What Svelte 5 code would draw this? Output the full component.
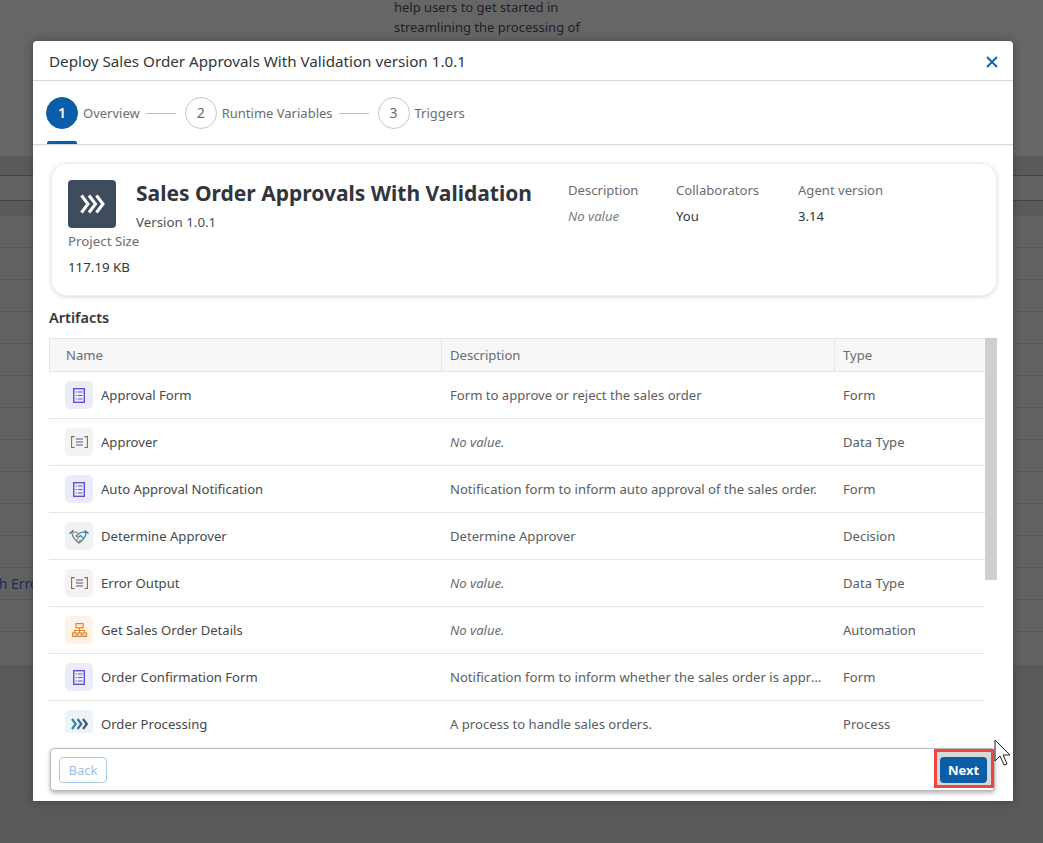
<script>
  const rows = [
    { name: 'Approval Form', desc: 'Form to approve or reject the sales order', type: 'Form', icon: 'form' },
    { name: 'Approver', desc: 'No value.', type: 'Data Type', icon: 'data', empty: true },
    { name: 'Auto Approval Notification', desc: 'Notification form to inform auto approval of the sales order.', type: 'Form', icon: 'form' },
    { name: 'Determine Approver', desc: 'Determine Approver', type: 'Decision', icon: 'decision' },
    { name: 'Error Output', desc: 'No value.', type: 'Data Type', icon: 'data', empty: true },
    { name: 'Get Sales Order Details', desc: 'No value.', type: 'Automation', icon: 'auto', empty: true },
    { name: 'Order Confirmation Form', desc: 'Notification form to inform whether the sales order is approved or rejected.', type: 'Form', icon: 'form' },
    { name: 'Order Processing', desc: 'A process to handle sales orders.', type: 'Process', icon: 'process' }
  ];
  const steps = [
    { n: 1, label: 'Overview' },
    { n: 2, label: 'Runtime Variables' },
    { n: 3, label: 'Triggers' }
  ];
  const bgRows = Array.from({ length: 14 });
</script>

<div class="page">
  <div class="bgtop">
    <div class="bgtext">
      <div>help users to get started in</div>
      <div>streamlining the processing of</div>
    </div>
  </div>
  <div class="bgband"></div>
  <div class="bgfield"></div>
  <div class="bgband2"></div>
  <div class="bgrows">
    {#each bgRows as _, i}
      <div class="bgrow">{#if i === 11}<span>ch Error</span>{/if}</div>
    {/each}
  </div>
  <div class="bgbottom"></div>

  <div class="modal">
    <header class="head">
      <span class="title">Deploy Sales Order Approvals With Validation version 1.0.1</span>
      <svg class="close" viewBox="0 0 12 12" width="12" height="12"><path d="M1 1l10 10M11 1L1 11" stroke="#0a5ea8" stroke-width="1.8" fill="none"/></svg>
    </header>

    <nav class="steps">
      {#each steps as s, i}
        <div class="step" class:active={i === 0}>
          <span class="num">{s.n}</span>
          <span class="lbl">{s.label}</span>
          {#if i < 2}<span class="dash"></span>{/if}
        </div>
      {/each}
    </nav>

    <div class="body">
      <section class="card">
        <div class="left">
          <div class="top">
            <div class="logo">
              <svg viewBox="0 0 25 20" width="25" height="20" fill="none" stroke="#fff" stroke-width="3">
                <path d="M1.5 1.5l6.500 8.500-6.500 8.500M9 1.500l6.500 8.500-6.500 8.500M16.500 1.500l6.500 8.500-6.500 8.500"/>
              </svg>
            </div>
            <div class="names">
              <h1>Sales Order Approvals With Validation</h1>
              <div class="ver">Version 1.0.1</div>
            </div>
          </div>
          <div class="size-l">Project Size</div>
          <div class="size-v">117.19 KB</div>
        </div>
        <div class="meta">
          <div class="m1"><div class="ml">Description</div><div class="mv novalue">No value</div></div>
          <div class="m2"><div class="ml">Collaborators</div><div class="mv">You</div></div>
          <div class="m3"><div class="ml">Agent version</div><div class="mv">3.14</div></div>
        </div>
      </section>

      <h2>Artifacts</h2>

      <div class="tablewrap">
        <div class="table">
          <div class="thead">
            <div class="c1">Name</div><div class="c2">Description</div><div class="c3">Type</div>
          </div>
          {#each rows as r}
            <div class="row">
              <div class="c1 namecell">
                <span class="ico {r.icon}">
                  {#if r.icon === 'form'}
                    <svg viewBox="0 0 12 15" width="12" height="15" fill="none">
                      <rect x=".7" y=".7" width="10.6" height="13.6" stroke="#5a45d8" stroke-width="1.300"/>
                      <path d="M2.500 4h1.200M5 4h4.500M2.500 7.500h1.200M5 7.500h4.500M2.500 11h1.200M5 11h4.500" stroke="#3d68c8" stroke-width="1"/>
                    </svg>
                  {:else if r.icon === 'data'}
                    <svg viewBox="0 0 17 12" width="17" height="12" fill="none" stroke-width="1.050">
                      <path d="M3.500 .6H.6v10.800h2.900M13.500 .6h2.900v10.800h-2.900" stroke="#96652f"/>
                      <path d="M5 3h7M5 6h7M5 9h7" stroke="#5a4f8c"/>
                    </svg>
                  {:else if r.icon === 'decision'}
                    <svg viewBox="0 0 20 15" width="20" height="15" fill="none" stroke-width="1.200">
                      <path d="M.5 4.500L4.500 1.500M19.500 4.500L15.500 1.500" stroke="#2f5f7f"/>
                      <path d="M3 4c.3 3.500 3.500 7.500 7 10 3.500-2.500 6.700-6.500 7-10-2.500-1.500-5-1-7 .5L7 7c1 1.500 2.500 1.200 3.500.3l1-.8 3.500 3.500" stroke="#3f7fa8"/>
                      <path d="M3 4c2-1.200 4-1 6 0M7 11.500l2.500-2M9.500 13l2.500-2.200" stroke="#d18a3a"/>
                    </svg>
                  {:else if r.icon === 'auto'}
                    <svg viewBox="0 0 15 14" width="15" height="14" fill="none" stroke="#e3872a" stroke-width="1.200">
                      <rect x="4" y=".6" width="7" height="4.200"/>
                      <path d="M7.500 4.800V8M2.500 10V7.500h10V10M7.500 8v2"/>
                      <rect x=".6" y="10" width="3.500" height="3.400"/>
                      <rect x="5.750" y="10" width="3.500" height="3.400"/>
                      <rect x="10.900" y="10" width="3.500" height="3.400"/>
                    </svg>
                  {:else}
                    <svg viewBox="0 0 17 12" width="17" height="12" fill="none" stroke-width="2.200">
                      <path d="M1 1l3.800 5L1 11" stroke="#2e88b0"/>
                      <path d="M6.500 1l3.800 5-3.800 5" stroke="#33708f"/>
                      <path d="M12 1l3.800 5-3.800 5" stroke="#3c5a70"/>
                    </svg>
                  {/if}
                </span>
                <span class="nm">{r.name}</span>
              </div>
              <div class="c2 desc" class:novalue={r.empty}>{r.desc}</div>
              <div class="c3">{r.type}</div>
            </div>
          {/each}
        </div>
        <div class="scroll"><div class="thumb"></div></div>
      </div>

      <footer class="foot">
        <button class="back" disabled>Back</button>
        <button class="next">Next</button>
        <span class="callout"></span>
      </footer>
    </div>
  </div>

  <svg class="cursor" viewBox="0 0 20 30" width="20" height="30">
    <path d="M1 1v21l5-5 4 9 3-1-4-9h7z" fill="#fff" stroke="#222" stroke-width="1"/>
  </svg>
</div>

<style>
  :global(body) {
    margin: 0;
    background: #5c5c5c;
    font-family: "Noto Sans", "Open Sans", sans-serif;
  }
  .page {
    position: relative;
    width: 1043px;
    height: 843px;
    overflow: hidden;
    background: #5a5a5a;
    font-size: 13px;
    color: #32363a;
  }
  .bgtop { height: 156px; background: #666; overflow: hidden; }
  .bgtext {
    padding-left: 394px;
    color: #1e1e28;
    line-height: 20px;
    margin-top: -3px;
    font-size: 13px;
  }
  .bgband { height: 19px; background: #5a5a5a; }
  .bgfield { height: 24px; background: #636363; border-top: 1px solid #444; border-bottom: 1px solid #444; }
  .bgband2 { height: 15px; background: #5a5a5a; }
  .bgrows { background: #626262; }
  .bgrow {
    height: 31px;
    border-bottom: 1px solid #585858;
    color: #1c2f55;
    line-height: 32px;
    overflow: hidden;
    white-space: nowrap;
    font-size: 14px;
  }
  .bgrow:last-child { height: 33px; border-bottom: 0; }
  .bgrow span { margin-left: -8px; display: inline-block; }
  .bgbottom { height: 178px; background: #595959; }

  .modal {
    position: absolute;
    left: 33px;
    top: 41px;
    width: 980px;
    height: 760px;
    background: #fff;
    border-radius: 4px 4px 0 0;
    display: flex;
    flex-direction: column;
    box-shadow: 0 0 8px rgba(0,0,0,.3);
  }
  .head {
    height: 39px;
    border-bottom: 1px solid #d9d9d9;
    display: flex;
    align-items: center;
    justify-content: space-between;
    padding: 0 15px 0 16px;
    flex: none;
  }
  .title { font-size: 15.2px; color: #32363a; }
  .close { margin-top: 2px; }
  .steps {
    height: 63px;
    flex: none;
    display: flex;
    align-items: center;
    padding: 0 13px;
    border-bottom: 1px solid #d9d9d9;
    box-shadow: 0 1px 2px rgba(0,0,0,.06);
    position: relative;
  }
  .step { display: flex; align-items: center; position: relative; height: 100%; }
  .num {
    width: 32px;
    height: 32px;
    box-sizing: border-box;
    border: 1px solid #c8c8c8;
    border-radius: 50%;
    display: flex;
    align-items: center;
    justify-content: center;
    color: #6a6d70;
    font-size: 14px;
    margin-right: 5px;
  }
  .active .num {
    background: #0a5ea8;
    border-color: #0a5ea8;
    color: #fff;
    font-weight: 600;
  }
  .active::after {
    content: "";
    position: absolute;
    left: 1px;
    bottom: 0;
    width: 30px;
    height: 3px;
    background: #0a5ea8;
    border-radius: 2px 2px 0 0;
  }
  .lbl { color: #6a6d70; font-size: 13px; white-space: nowrap; }
  .dash { width: 30px; height: 1px; background: #bdbdbd; margin: 1px 9px 0 6px; }

  .body { flex: 1; position: relative; padding: 0 16px; min-height: 0; overflow: hidden; }
  .card {
    margin-top: 18px;
    height: 133px;
    box-sizing: border-box;
    margin-left: 2px;
    border: 1px solid #eee;
    border-radius: 16px;
    box-shadow: 0 1px 4px rgba(0,0,0,.16);
    padding: 16px;
    display: flex;
  }
  .left { width: 500px; }
  .top { display: flex; height: 48px; }
  .logo {
    width: 48px;
    height: 48px;
    background: #3f4c5e;
    border-radius: 4px;
    display: flex;
    align-items: center;
    justify-content: center;
    flex: none;
  }
  .names { margin-left: 20px; }
  h1 { margin: 0; font-size: 21px; font-weight: 700; line-height: 26px; white-space: nowrap; color: #32363a; }
  .ver { font-size: 13.3px; color: #4c4f52; margin-top: 7px; line-height: 18px; }
  .size-l { margin-top: 4px; color: #6a6d70; font-size: 13.3px; line-height: 18px; }
  .size-v { margin-top: 8px; color: #32363a; font-size: 13.3px; line-height: 18px; }
  .meta { display: flex; padding-top: 1px; }
  .m1 { width: 108px; }
  .m2 { width: 122px; }
  .ml { color: #6a6d70; font-size: 13.1px; line-height: 18px; }
  .mv { margin-top: 8px; font-size: 13.1px; line-height: 18px; color: #32363a; }
  .novalue { font-style: italic; color: #7a7d80; }
  h2 { margin: 11px 0 11px; font-size: 14.5px; font-weight: 600; line-height: 20px; color: #32363a; }

  .tablewrap { position: relative; height: 395px; overflow: hidden; display: flex; }
  .table { width: 936px; flex: none; }
  .thead {
    display: flex;
    height: 32px;
    align-items: center;
    background: #f7f7f7;
    border: 1px solid #e5e5e5;
    border-right: 0;
    color: #6a6d70;
    font-size: 13.1px;
  }
  .thead .c1, .thead .c2, .thead .c3 { height: 32px; line-height: 32px; }
  .thead .c1, .thead .c2 { border-right: 1px solid #e5e5e5; }
  .row {
    display: flex;
    height: 46px;
    align-items: center;
    border-bottom: 1px solid #e5e5e5;
    font-size: 13.1px;
    color: #5a5d60;
  }
  .c1 { width: 392px; padding-left: 16px; box-sizing: border-box; flex: none; }
  .c2 { width: 393px; padding: 0 8px; box-sizing: border-box; flex: none; white-space: nowrap; overflow: hidden; text-overflow: ellipsis; }
  .c3 { padding-left: 8px; flex: 1; }
  .row .c1 { width: 393px; }
  .desc { color: #5a5d60; }
  .desc.novalue { color: #6a6d70; }
  .namecell { display: flex; align-items: center; }
  .ico {
    width: 28px;
    height: 28px;
    border-radius: 5px;
    display: flex;
    align-items: center;
    justify-content: center;
    margin-right: 8px;
    flex: none;
  }
  .ico.form { background: #ecebf8; }
  .ico.data { background: #f3f3f3; }
  .ico.decision { background: #edf3f7; }
  .ico.auto { background: #fdf2e7; }
  .ico.process { background: #edf3f7; }
  .nm { color: #45484b; }
  .scroll { width: 12px; flex: none; }
  .thumb { width: 12px; height: 242px; background: #cfcfcf; }

  .foot {
    position: absolute;
    left: 17px;
    right: 18px;
    top: 603px;
    height: 43px;
    box-sizing: border-box;
    border: 1px solid #bbb;
    border-radius: 4px;
    background: #fff;
    box-shadow: 0 2px 4px rgba(0,0,0,.3);
    display: flex;
    align-items: center;
    justify-content: space-between;
    padding: 0 7px 0 8px;
  }
  button { font-family: inherit; font-size: 13px; height: 26px; border-radius: 4px; cursor: pointer; padding: 0; }
  .back {
    background: #fff;
    color: #9dbfdf;
    border: 1px solid #a8c8e4;
    width: 48px;
  }
  .next {
    position: relative;
    z-index: 1;
    background: #0a5ea8;
    color: #fff;
    border: 0;
    width: 47px;
    font-weight: 700;
  }
  .callout {
    position: absolute;
    right: 0;
    top: 0;
    width: 60px;
    height: 39px;
    box-sizing: border-box;
    border: 3px solid #f04444;
    background: #d8d8d8;
  }
  .cursor { position: absolute; left: 994px; top: 739px; }
</style>
